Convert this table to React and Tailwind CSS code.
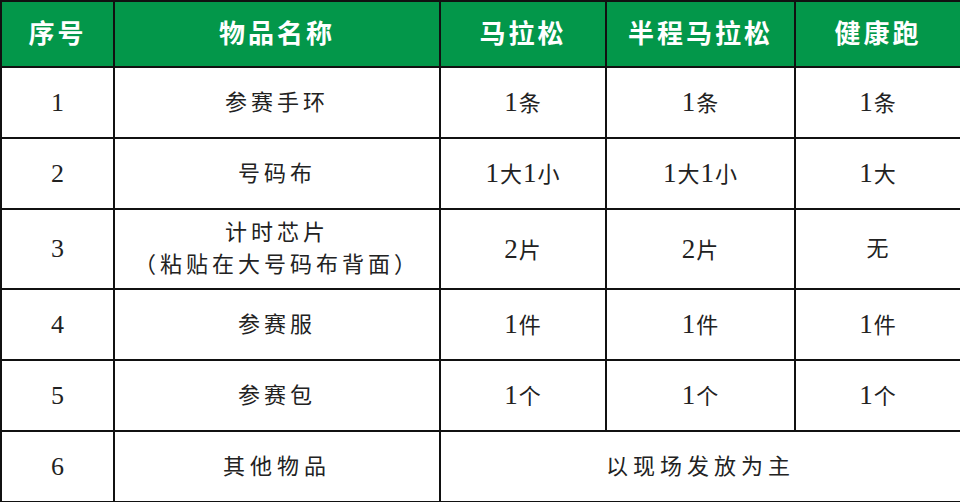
import React from "react";

const rows = [
  { no: "1", name: ["参赛手环"], full: "1条", half: "1条", fun: "1条", h: "h-[71px]" },
  { no: "2", name: ["号码布"], full: "1大1小", half: "1大1小", fun: "1大", h: "h-[71px]" },
  { no: "3", name: ["计时芯片", "（粘贴在大号码布背面）"], full: "2片", half: "2片", fun: "无", h: "h-[80px]" },
  { no: "4", name: ["参赛服"], full: "1件", half: "1件", fun: "1件", h: "h-[71px]" },
  { no: "5", name: ["参赛包"], full: "1个", half: "1个", fun: "1个", h: "h-[71px]" },
];

const cell = "border-2 border-[#111] text-center align-middle p-0";

// digits are set bigger in a serif face, the CJK part stays at 22px
function Mixed({ text }) {
  const parts = text.match(/\d+|\D+/g);
  return (
    <span className="tracking-[1px]">
      {parts.map((p, i) =>
        /\d/.test(p) ? (
          <span key={i} className="text-[27px] font-['Liberation_Serif',serif]">
            {p}
          </span>
        ) : (
          <span key={i}>{p}</span>
        )
      )}
    </span>
  );
}

export default function App() {
  return (
    <div
      className="w-[960px] h-[502px] bg-white overflow-hidden text-[#222]"
      style={{ fontFamily: '"Liberation Serif", "Noto Sans CJK SC", serif' }}
    >
      <table className="w-[960px] border-collapse table-fixed border-2 border-[#111]">
        <colgroup>
          <col className="w-[113px]" />
          <col className="w-[326px]" />
          <col className="w-[166px]" />
          <col className="w-[189px]" />
          <col className="w-[166px]" />
        </colgroup>
        <thead>
          <tr className="h-[66px] bg-[#03974a] text-white text-[26px] font-bold tracking-[3px]">
            <th className={cell}>序号</th>
            <th className={cell}>物品名称</th>
            <th className={cell}>马拉松</th>
            <th className={cell}>半程马拉松</th>
            <th className={cell}>健康跑</th>
          </tr>
        </thead>
        <tbody className="text-[22px] leading-none">
          {rows.map((r) => (
            <tr key={r.no} className={r.h}>
              <td className={cell + " text-[26px]"}>{r.no}</td>
              <td className={cell + " tracking-[4px] leading-[32px]"}>
                {r.name.map((n) => (
                  <div key={n}>{n}</div>
                ))}
              </td>
              <td className={cell}>
                <Mixed text={r.full} />
              </td>
              <td className={cell}>
                <Mixed text={r.half} />
              </td>
              <td className={cell}>
                <Mixed text={r.fun} />
              </td>
            </tr>
          ))}
          <tr className="h-[71px]">
            <td className={cell + " text-[26px]"}>6</td>
            <td className={cell + " tracking-[5px]"}>其他物品</td>
            <td className={cell + " tracking-[5px]"} colSpan={3}>
              以现场发放为主
            </td>
          </tr>
        </tbody>
      </table>
    </div>
  );
}
